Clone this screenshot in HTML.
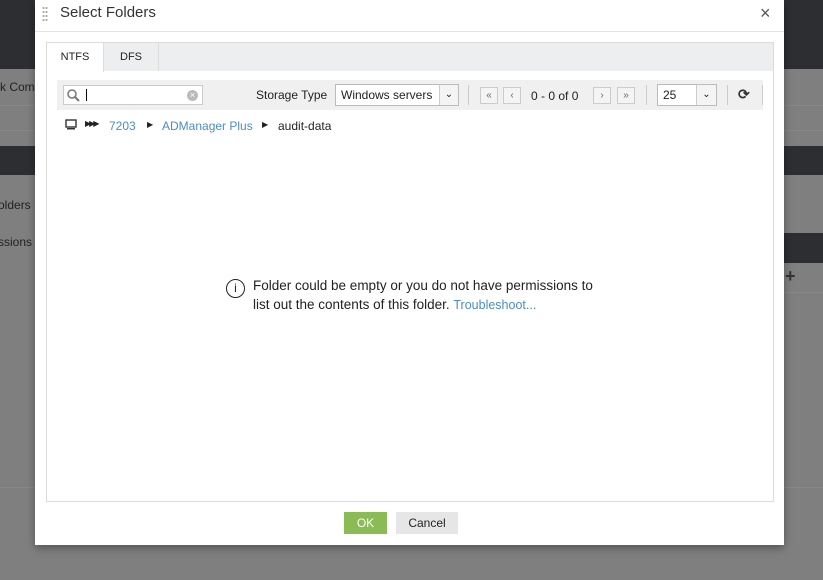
<!DOCTYPE html>
<html><head><style>
*{box-sizing:border-box;margin:0;padding:0}
body{width:823px;height:580px;background:#7f7f7f;font-family:"Liberation Sans",sans-serif;font-size:12px;color:#222;position:relative;overflow:hidden}
.abs{position:absolute}
</style></head><body>
<div class="abs" style="left:0;top:0;width:823px;height:69px;background:#2c2e31"></div>
<div class="abs" style="left:0;top:105px;width:823px;height:1px;background:#878787"></div>
<div class="abs" style="left:0;top:130px;width:823px;height:1px;background:#878787"></div>
<div class="abs" style="left:0;top:146px;width:823px;height:29px;background:#2c2e31"></div>
<div class="abs" style="left:784px;top:233px;width:39px;height:30px;background:#2c2e31"></div>
<div class="abs" style="left:784px;top:292px;width:39px;height:1px;background:#878787"></div>
<div class="abs" style="left:0;top:487px;width:823px;height:1px;background:#878787"></div>
<div class="abs" style="left:0;top:80px;color:#222;font-size:12px">k Comp</div>
<div class="abs" style="left:-2px;top:198px;color:#222">olders</div>
<div class="abs" style="left:-2px;top:235px;color:#222">ssions</div>
<div class="abs" style="left:785px;top:266px;color:#333;font-size:18px;font-weight:bold">+</div>

<div class="abs" style="left:35px;top:0;width:749px;height:545px;background:#fff;box-shadow:0 3px 8px rgba(0,0,0,.35)">
 <div class="abs" style="left:7px;top:6px;width:6px;height:16px;background:radial-gradient(circle,#aaa 1px,transparent 1.2px) 0 0/3px 4px"></div>
 <div class="abs" style="left:25px;top:4px;font-size:15px;color:#333">Select Folders</div>
 <div class="abs" style="left:725px;top:3px;font-size:18px;color:#555">×</div>
 <div class="abs" style="left:0;top:31px;width:749px;height:1px;background:#e3e3e3"></div>
 <div class="abs" style="left:11px;top:42px;width:728px;height:460px;border:1px solid #dcdcdc">
  <div class="abs" style="left:0;top:0;width:726px;height:28px;background:#eceeef"></div>
  <div class="abs" style="left:0;top:0;width:57px;height:29px;background:#fff;border-right:1px solid #ddd;text-align:center;line-height:28px;font-size:11px">NTFS</div>
  <div class="abs" style="left:57px;top:0;width:55px;height:28px;border-right:1px solid #ddd;text-align:center;line-height:28px;font-size:11px">DFS</div>
  <div class="abs" style="left:10px;top:37px;width:706px;height:30px;background:#f0f0f0"></div>
  <div class="abs" style="left:16px;top:42px;width:140px;height:20px;background:#fff;border:1px solid #ccc">
   <svg class="abs" style="left:3px;top:3px" width="13" height="13"><circle cx="5" cy="5" r="4" fill="none" stroke="#777" stroke-width="1.5"/><line x1="8" y1="8" x2="12" y2="12" stroke="#777" stroke-width="2"/></svg>
   <div class="abs" style="left:22px;top:3px;width:1px;height:12px;background:#000"></div>
   <div class="abs" style="left:123px;top:4px;width:11px;height:11px;border-radius:50%;background:#bbb;color:#fff;font-size:9px;line-height:11px;text-align:center">×</div>
  </div>
  <div class="abs" style="left:209px;top:45px;font-size:12px">Storage Type</div>
  <div class="abs" style="left:288px;top:41px;width:124px;height:22px;background:#fff;border:1px solid #bbb;font-size:12px;line-height:20px;padding-left:5px">Windows servers<div class="abs" style="right:0;top:0;width:19px;height:20px;border-left:1px solid #ccc;background:#f4f4f4;text-align:center;font-size:10px">&#8964;</div></div>
  <div class="abs" style="left:421px;top:42px;width:1px;height:20px;background:#ccc"></div>
  <div class="abs" style="left:433px;top:44px;width:18px;height:17px;border:1px solid #ccc;background:#f4f4f4;font-size:10px;text-align:center;line-height:15px;color:#666">«</div>
  <div class="abs" style="left:456px;top:44px;width:18px;height:17px;border:1px solid #ccc;background:#f4f4f4;font-size:10px;text-align:center;line-height:15px;color:#666">‹</div>
  <div class="abs" style="left:484px;top:46px;font-size:12px">0 - 0 of 0</div>
  <div class="abs" style="left:546px;top:44px;width:18px;height:17px;border:1px solid #ccc;background:#f4f4f4;font-size:10px;text-align:center;line-height:15px;color:#666">›</div>
  <div class="abs" style="left:570px;top:44px;width:18px;height:17px;border:1px solid #ccc;background:#f4f4f4;font-size:10px;text-align:center;line-height:15px;color:#666">»</div>
  <div class="abs" style="left:599px;top:42px;width:1px;height:20px;background:#ccc"></div>
  <div class="abs" style="left:610px;top:41px;width:60px;height:22px;background:#fff;border:1px solid #bbb;line-height:20px;padding-left:5px">25<div class="abs" style="right:0;top:0;width:20px;height:20px;border-left:1px solid #ccc;background:#f4f4f4;text-align:center;font-size:10px">&#8964;</div></div>
  <div class="abs" style="left:680px;top:42px;width:1px;height:20px;background:#ccc"></div>
  <div class="abs" style="left:691px;top:43px;font-size:14px;font-weight:bold;color:#333">⟳</div>
  <div class="abs" style="left:715px;top:42px;width:1px;height:20px;background:#ccc"></div>
  <svg class="abs" style="left:18px;top:76px" width="12" height="11"><rect x="1" y="1" width="10" height="7" fill="none" stroke="#333" stroke-width="1.4"/><rect x="2" y="9" width="8" height="1.5" fill="#333"/></svg>
  <div class="abs" style="left:38px;top:76px;font-size:8px;letter-spacing:-2px">▶▶▶</div>
  <div class="abs" style="left:62px;top:76px;color:#4a8ec2">7203</div>
  <div class="abs" style="left:100px;top:77px;font-size:8px">▶</div>
  <div class="abs" style="left:115px;top:76px;color:#4a8ec2">ADManager Plus</div>
  <div class="abs" style="left:215px;top:77px;font-size:8px">▶</div>
  <div class="abs" style="left:231px;top:76px">audit-data</div>
  <div class="abs" style="left:179px;top:236px;width:19px;height:19px;border:1.5px solid #222;border-radius:50%;text-align:center;font-size:12px;line-height:17px">i</div>
  <div class="abs" style="left:206px;top:233px;font-size:13.5px;line-height:19px;color:#222;white-space:nowrap">Folder could be empty or you do not have permissions to<br>list out the contents of this folder. <span style="color:#4a8ec2;font-size:12.5px">Troubleshoot...</span></div>
 </div>
 <div class="abs" style="left:309px;top:512px;width:43px;height:22px;background:#8bbb55;color:#fff;text-align:center;line-height:22px">OK</div>
 <div class="abs" style="left:361px;top:512px;width:62px;height:22px;background:#e6e6e6;text-align:center;line-height:22px">Cancel</div>
</div>
</body></html>
